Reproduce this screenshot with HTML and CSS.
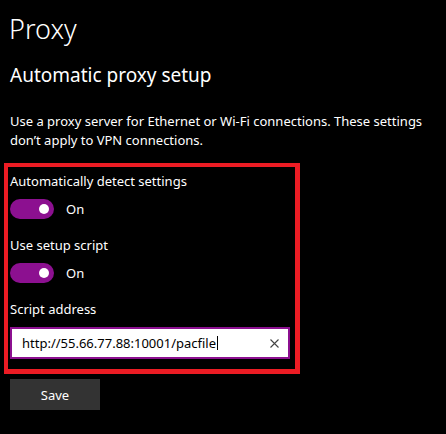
FILE: index.html
```html
<!DOCTYPE html>
<html lang="en">
<head>
<meta charset="utf-8">
<title>Proxy</title>
<link rel="stylesheet" href="styles.css">
</head>
<body>
<main class="page">
  <h1 class="title">Proxy</h1>
  <h2 class="subtitle">Automatic proxy setup</h2>
  <p class="desc">Use a proxy server for Ethernet or Wi-Fi connections. These settings don’t apply to VPN connections.</p>
  <section class="highlight">
    <div class="label">Automatically detect settings</div>
    <div class="toggle-row">
      <span class="toggle"><span class="knob"></span></span>
      <span class="state">On</span>
    </div>
    <div class="label">Use setup script</div>
    <div class="toggle-row">
      <span class="toggle"><span class="knob"></span></span>
      <span class="state">On</span>
    </div>
    <div class="label">Script address</div>
    <div class="input">
      <span class="value">http://55.66.77.88:10001/pacfile</span><span class="caret"></span>
      <svg class="clear" width="9" height="9" viewBox="0 0 9 9"><path d="M0.5 0.5 L8.5 8.5 M8.5 0.5 L0.5 8.5" stroke="#444" stroke-width="1.1" fill="none"/></svg>
    </div>
  </section>
  <button class="save">Save</button>
</main>
</body>
</html>
```
FILE: styles.css
```css
html, body {
  margin: 0;
  padding: 0;
  background: #000;
}
body {
  width: 446px;
  height: 434px;
  overflow: hidden;
  color: #fff;
  font-family: "Noto Sans", "Open Sans", sans-serif;
}
.page {
  padding: 0 0 0 10px;
}
.title {
  margin: 0 0 0 -1px;
  padding-top: 12px;
  font-size: 27px;
  font-weight: 300;
  line-height: 34px;
  height: 50px;
}
.subtitle {
  margin: 0;
  font-size: 19px;
  font-weight: 400;
  line-height: 26px;
  height: 50px;
}
.desc {
  margin: 0;
  font-size: 13px;
  line-height: 19px;
  width: 430px;
  height: 51px;
}
.highlight {
  margin-left: -6px;
  width: 285px;
  border: 4px solid #ec1c24;
  border-right-width: 5px;
  border-bottom-width: 5px;
  padding: 5px 0 10px 2px;
}
.label {
  font-size: 13px;
  line-height: 19px;
  height: 27px;
}
.toggle-row {
  display: flex;
  align-items: center;
  gap: 12px;
  height: 20px;
  margin-bottom: 17px;
}
.toggle {
  display: flex;
  align-items: center;
  justify-content: flex-end;
  width: 44px;
  height: 20px;
  border-radius: 10px;
  background: #8c1090;
  box-sizing: border-box;
  padding-right: 5px;
}
.knob {
  width: 10px;
  height: 10px;
  border-radius: 50%;
  background: #fff;
}
.state {
  font-size: 13px;
  line-height: 20px;
}
.input {
  display: flex;
  align-items: center;
  box-sizing: border-box;
  width: 280px;
  height: 32px;
  border: 2px solid #8c1090;
  background: #fff;
  color: #000;
  padding: 0 9px 0 10px;
  font-size: 13px;
}
.value {
  white-space: nowrap;
}
.caret {
  width: 1px;
  height: 14px;
  background: #000;
  margin-left: 1px;
}
.clear {
  margin-left: auto;
}
.save {
  display: block;
  margin-top: 5px;
  width: 90px;
  height: 31px;
  border: 0;
  background: #333;
  color: #fff;
  font-family: "Noto Sans", "Open Sans", sans-serif;
  font-size: 13px;
  padding: 0;
}
```
